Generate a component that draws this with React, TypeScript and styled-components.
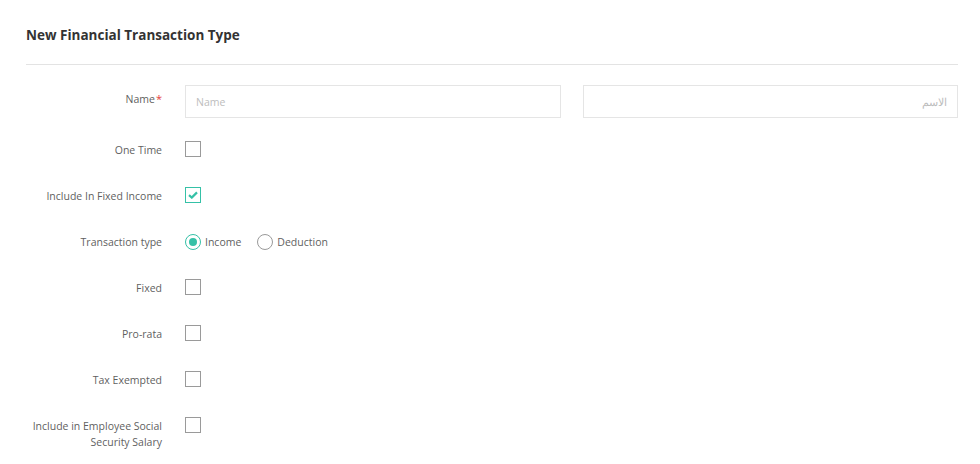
import React from "react";
import styled, { createGlobalStyle } from "styled-components";

const GlobalStyle = createGlobalStyle`
  html, body { margin: 0; padding: 0; background: #fff; }
  body { font-family: "Open Sans", "Noto Sans", sans-serif; color: #555; }
  * { box-sizing: border-box; }
`;

const TEAL = "#35c1a7";

const Page = styled.div`
  width: 980px;
  padding: 26px 22px 0 26px;
`;

const Title = styled.h1`
  margin: 0;
  font-size: 13.5px;
  line-height: 18px;
  font-weight: 700;
  color: #333;
`;

const Divider = styled.hr`
  margin: 20px 0 0 0;
  border: 0;
  border-top: 1px solid #e3e3e3;
  height: 0;
`;

const Form = styled.div`
  display: flex;
  flex-direction: column;
  padding-top: 20px;
`;

const Row = styled.div<{ $h?: number }>`
  display: grid;
  grid-template-columns: 136px 1fr;
  column-gap: 23px;
  align-items: start;
  min-height: ${(p) => p.$h ?? 46}px;
`;

const Label = styled.div<{ $pt?: number }>`
  text-align: right;
  font-size: 10.5px;
  line-height: 16px;
  color: #5f5f5f;
  padding-top: ${(p) => p.$pt ?? 1}px;
`;

const Required = styled.span`
  color: #e5413b;
  margin-left: 1px;
  font-size: 11px;
`;

const Inputs = styled.div`
  display: grid;
  grid-template-columns: 1fr 1fr;
  column-gap: 22px;
`;

const TextInput = styled.input`
  height: 33px;
  width: 100%;
  border: 1px solid #e5e5e5;
  border-radius: 0;
  padding: 0 10px;
  font-family: "Open Sans", "Noto Sans", sans-serif;
  font-size: 10.5px;
  color: #555;
  outline: none;
  &::placeholder { color: #bdbdbd; }
`;

const Control = styled.div`
  display: flex;
  align-items: flex-start;
`;

const Box = styled.span<{ $checked?: boolean }>`
  display: flex;
  align-items: center;
  justify-content: center;
  width: 16px;
  height: 16px;
  border: 1px solid ${(p) => (p.$checked ? TEAL : "#9a9a9a")};
  background: #fff;
  svg { display: block; }
`;

const Options = styled.div`
  display: flex;
  align-items: center;
  gap: 16px;
  height: 17px;
  padding-top: 1px;
`;

const Option = styled.label`
  display: inline-flex;
  align-items: center;
  gap: 4px;
  font-size: 10.5px;
  line-height: 16px;
  color: #5f5f5f;
`;

const Radio = styled.span<{ $checked?: boolean }>`
  display: inline-flex;
  align-items: center;
  justify-content: center;
  width: 16px;
  height: 16px;
  border-radius: 50%;
  border: 1px solid ${(p) => (p.$checked ? TEAL : "#9a9a9a")};
  &::after {
    content: "";
    display: ${(p) => (p.$checked ? "block" : "none")};
    width: 8px;
    height: 8px;
    border-radius: 50%;
    background: ${TEAL};
  }
`;

const Checkbox = ({ checked }: { checked?: boolean }) => (
  <Box $checked={checked}>
    {checked && (
      <svg width="10" height="8" viewBox="0 0 10 8">
        <path d="M1 4.2 L3.8 6.6 L9 1.4" fill="none" stroke={TEAL} strokeWidth="2.2" />
      </svg>
    )}
  </Box>
);

const checkRows: { label: React.ReactNode; checked?: boolean }[] = [
  { label: "One Time" },
  { label: "Include In Fixed Income", checked: true },
];

const checkRows2: { label: React.ReactNode }[] = [
  { label: "Fixed" },
  { label: "Pro-rata" },
  { label: "Tax Exempted" },
  { label: "Include in Employee Social Security Salary" },
];

export default function App() {
  return (
    <Page>
      <GlobalStyle />
      <Title>New Financial Transaction Type</Title>
      <Divider />
      <Form>
        <Row $h={56}>
          <Label $pt={6}>
            Name<Required>*</Required>
          </Label>
          <Inputs>
            <TextInput placeholder="Name" />
            <TextInput placeholder="الاسم" dir="rtl" />
          </Inputs>
        </Row>
        {checkRows.map((r, i) => (
          <Row key={i}>
            <Label>{r.label}</Label>
            <Control><Checkbox checked={r.checked} /></Control>
          </Row>
        ))}
        <Row>
          <Label>Transaction type</Label>
          <Options>
            <Option>
              <Radio $checked />
              Income
            </Option>
            <Option>
              <Radio />
              Deduction
            </Option>
          </Options>
        </Row>
        {checkRows2.map((r, i) => (
          <Row key={i}>
            <Label>{r.label}</Label>
            <Control><Checkbox /></Control>
          </Row>
        ))}
      </Form>
    </Page>
  );
}
